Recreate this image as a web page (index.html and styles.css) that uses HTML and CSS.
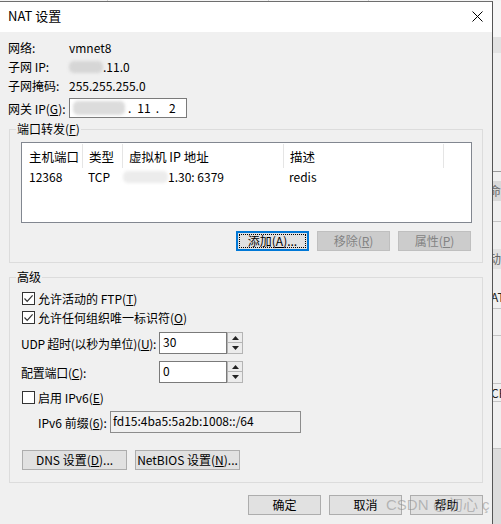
FILE: index.html
```html
<!DOCTYPE html>
<html lang="zh-CN">
<head>
<meta charset="utf-8">
<title>NAT 设置</title>
<link rel="stylesheet" href="styles.css">
</head>
<body>
<div class="topstrip"><span class="ts1"></span><span class="ts2"></span><span class="ts3"></span></div>
<div class="screen">
  <div class="dialog">
    <div class="titlebar">
      <span class="title">NAT 设置</span>
      <svg class="close" width="11" height="11" viewBox="0 0 11 11"><path d="M0.5 0.5 L10.5 10.5 M10.5 0.5 L0.5 10.5" stroke="#000" stroke-width="1" fill="none"/></svg>
    </div>
    <div class="body">
      <div class="info">
        <div class="row"><span class="lbl">网络:</span><span>vmnet8</span></div>
        <div class="row"><span class="lbl">子网 IP:</span><span class="blur b-subnet"></span><span>.11.0</span></div>
        <div class="row"><span class="lbl">子网掩码:</span><span>255.255.255.0</span></div>
        <div class="row gw"><span class="lbl">网关 IP(<u>G</u>):</span>
          <div class="ipbox"><span class="blur b-gw"></span><span class="ip-d1">.</span><span class="ip-11">11</span><span class="ip-d2">.</span><span class="ip-2">2</span></div>
        </div>
      </div>

      <fieldset class="group g1">
        <legend>端口转发(<u>F</u>)</legend>
        <div class="list">
          <div class="lhead">
            <div class="c c1">主机端口</div>
            <div class="c c2">类型</div>
            <div class="c c3">虚拟机 IP 地址</div>
            <div class="c c4">描述</div>
          </div>
          <div class="lrow">
            <div class="c c1">12368</div>
            <div class="c c2">TCP</div>
            <div class="c c3 c3d"><span class="blur b-vm"></span><span>1.30: 6379</span></div>
            <div class="c c4">redis</div>
          </div>
        </div>
        <div class="btnrow">
          <button class="btn btn-default"><span class="focus">添加(<u>A</u>)...</span></button>
          <button class="btn" disabled>移除(<u>R</u>)</button>
          <button class="btn" disabled>属性(<u>P</u>)</button>
        </div>
      </fieldset>

      <fieldset class="group g2">
        <legend>高级</legend>
        <div class="chk">
          <span class="box"><svg width="11" height="11" viewBox="0 0 11 11"><path d="M1.5 5.5 L4.2 8.3 L9.6 2.3" stroke="#333" stroke-width="1.2" fill="none"/></svg></span>
          <span>允许活动的 FTP(<u>T</u>)</span>
        </div>
        <div class="chk">
          <span class="box"><svg width="11" height="11" viewBox="0 0 11 11"><path d="M1.5 5.5 L4.2 8.3 L9.6 2.3" stroke="#333" stroke-width="1.2" fill="none"/></svg></span>
          <span>允许任何组织唯一标识符(<u>O</u>)</span>
        </div>
        <div class="field f1">
          <span class="flbl">UDP 超时(以秒为单位)(<u>U</u>):</span>
          <span class="num">30</span>
          <span class="spin"><span class="sb sb-up"><svg width="7" height="4" viewBox="0 0 7 4"><path d="M0 4 L3.5 0 L7 4Z" fill="#222"/></svg></span><span class="sb sb-dn"><svg width="7" height="4" viewBox="0 0 7 4"><path d="M0 0 L3.5 4 L7 0Z" fill="#222"/></svg></span></span>
        </div>
        <div class="field f2">
          <span class="flbl">配置端口(<u>C</u>):</span>
          <span class="num">0</span>
          <span class="spin"><span class="sb sb-up"><svg width="7" height="4" viewBox="0 0 7 4"><path d="M0 4 L3.5 0 L7 4Z" fill="#222"/></svg></span><span class="sb sb-dn"><svg width="7" height="4" viewBox="0 0 7 4"><path d="M0 0 L3.5 4 L7 0Z" fill="#222"/></svg></span></span>
        </div>
        <div class="chk chk3">
          <span class="box"></span>
          <span>启用 IPv6(<u>E</u>)</span>
        </div>
        <div class="pfx">
          <span class="plbl">IPv6 前缀(<u>6</u>):</span>
          <span class="pinput">fd15:4ba5:5a2b:1008::/64</span>
        </div>
        <div class="dnsrow">
          <button class="btn btn-wide">DNS 设置(<u>D</u>)...</button>
          <button class="btn btn-wide">NetBIOS 设置(<u>N</u>)...</button>
        </div>
      </fieldset>

      <div class="footer">
        <button class="btn">确定</button>
        <button class="btn">取消</button>
        <button class="btn">帮助</button>
      </div>
    </div>
  </div>
  <div class="side">
    <div class="s-a"></div>
    <div class="s-b"></div>
    <div class="s-c"></div>
    <div class="s-line"></div>
    <div class="s-d"></div>
    <div class="s-e">命</div>
    <div class="s-f"></div>
    <div class="s-line2"></div>
    <div class="s-g"></div>
    <div class="s-h">动</div>
    <div class="s-i"></div>
    <div class="s-j">AT</div>
    <div class="s-line2"></div>
    <div class="s-k"></div>
    <div class="s-line2"></div>
    <div class="s-l"></div>
    <div class="s-line2"></div>
    <div class="s-m">CP</div>
    <div class="s-line2"></div>
    <div class="s-n"></div>
    <div class="s-line2"></div>
    <div class="s-o"></div>
  </div>
</div>
<div class="watermark">CSDN @初心&nbsp;ç</div>
</body>
</html>
```
FILE: styles.css
```css
* { box-sizing: border-box; }

html, body {
  margin: 0;
  padding: 0;
}

body {
  width: 501px;
  height: 524px;
  overflow: hidden;
  position: relative;
  background: #f0f0f0;
  color: #000;
  font-family: "Noto Sans CJK SC", "Noto Sans", sans-serif;
  font-size: 12px;
  line-height: 19px;
}

u { text-decoration: underline; text-underline-offset: 1px; }

/* strip of the window behind, above the dialog */
.topstrip {
  height: 1px;
  display: flex;
  background: #f4f4f4;
}
.topstrip span { height: 1px; border-right: 1px solid #cfcfcf; }
.ts1 { width: 108px; }
.ts2 { width: 161px; }
.ts3 { width: 100px; }

.screen {
  display: flex;
  height: 523px;
}

.dialog {
  width: 493px;
  flex: none;
  border-top: 1px solid #6e6e6e;
  border-right: 1px solid #555;
  background: #f0f0f0;
  display: flex;
  flex-direction: column;
}

.titlebar {
  height: 30px;
  flex: none;
  background: #fff;
  display: flex;
  align-items: center;
  justify-content: space-between;
  padding: 0 9px 2px 8px;
}
.title {
  font-size: 13px;
  line-height: 16px;
}
.close { display: block; }

.body {
  display: flex;
  flex-direction: column;
}

/* network info */
.info {
  margin-top: 6px;
  padding-left: 8px;
}
.row {
  display: flex;
  align-items: center;
  height: 19px;
}
.lbl { width: 61px; flex: none; white-space: nowrap; }

.blur {
  display: inline-block;
  border-radius: 5px;
  filter: blur(1.5px);
}
.b-subnet {
  width: 34px;
  height: 12px;
  background: #d6d6d6;
}

.gw {
  height: 20px;
  margin-top: 3px;
}
.ipbox {
  width: 118px;
  height: 20px;
  border: 1px solid #7a7a7a;
  background: #fff;
  display: flex;
  align-items: center;
  padding-left: 3px;
  line-height: 18px;
}
.b-gw {
  width: 52px;
  height: 14px;
  background: #dcdcdc;
}
.ip-d1 { margin-left: 3px; }
.ip-11 { margin-left: 6px; }
.ip-d2 { margin-left: 5px; }
.ip-2 { margin-left: 10px; }

/* group boxes */
.group {
  min-width: 0;
  border: 1px solid #dcdcdc;
}
.group legend {
  padding: 0 1px;
  height: 16px;
  line-height: 16px;
  white-space: nowrap;
}
.g1 {
  margin: 3px 9px 0 9px;
  padding: 5px 10px 11px 6px;
}
.g2 {
  margin: 6px 9px 0 9px;
  padding: 4px 10px 12px 6px;
}

/* list view */
.list {
  margin-left: 5px;
  height: 81px;
  border: 1px solid #828790;
  background: #fff;
}
.lhead, .lrow {
  display: grid;
  grid-template-columns: 61px 40px 161px 160px;
}
.lhead { height: 25px; }
.lhead .c {
  border-right: 1px solid #e5e5e5;
  line-height: 25px;
  margin-top: 1px;
  height: 24px;
  padding-left: 6px;
  font-size: 12.5px;
  white-space: nowrap;
}
.lhead .c1 { padding-left: 7px; }
.lrow { height: 18px; }
.lrow .c {
  line-height: 18px;
  padding-left: 6px;
  color: #000;
  white-space: nowrap;
}
.lrow .c1 { padding-left: 7px; }
.lrow .c2 { padding-left: 5px; }
.lrow .c4 { padding-left: 5px; }
.lrow .c3d {
  padding-left: 0;
  display: flex;
  align-items: center;
}
.b-vm {
  width: 45px;
  height: 12px;
  background: #ececec;
}

/* buttons */
.btn {
  width: 73px;
  height: 20px;
  padding: 0;
  margin: 0;
  border: 1px solid #adadad;
  background: #e1e1e1;
  color: #000;
  font-family: inherit;
  font-size: 12px;
  line-height: 18px;
  text-align: center;
  white-space: nowrap;
  flex: none;
}
.btn:disabled {
  background: #cccccc;
  border-color: #bfbfbf;
  color: #838383;
}
.btn-default {
  border: 1px solid #0078d7;
  box-shadow: inset 0 0 0 1px #0078d7;
  padding: 2px;
  line-height: 14px;
}
.focus {
  display: block;
  height: 14px;
  outline: 1px dotted #000;
  outline-offset: -1px;
  line-height: 14px;
}
.btnrow {
  display: flex;
  justify-content: flex-end;
  gap: 8px;
  margin-top: 8px;
  margin-right: 1px;
}

/* advanced */
.chk {
  display: flex;
  align-items: center;
  height: 19px;
  margin-left: 6px;
  white-space: nowrap;
}
.box {
  width: 13px;
  height: 13px;
  flex: none;
  border: 1px solid #333;
  background: #fff;
  margin-right: 3px;
  display: flex;
  align-items: center;
  justify-content: center;
}
.box svg { display: block; }

.field {
  display: flex;
  align-items: center;
  height: 22px;
  margin-left: 5px;
}
.f1 { margin-top: 5px; }
.f2 { margin-top: 7px; }
.flbl {
  width: 138px;
  flex: none;
  white-space: nowrap;
  letter-spacing: -0.25px;
}
.num {
  width: 68px;
  height: 22px;
  flex: none;
  border: 1px solid #7a7a7a;
  background: #fff;
  padding-left: 3px;
  line-height: 18px;
}
.spin {
  width: 16px;
  height: 22px;
  flex: none;
  display: flex;
  flex-direction: column;
}
.sb {
  height: 11px;
  border: 1px solid #b4b4b4;
  background: #ececec;
  display: flex;
  align-items: center;
  justify-content: center;
}
.sb-dn { border-top: none; }
.sb svg { display: block; }

.chk3 { margin-top: 5px; }

.pfx {
  display: flex;
  align-items: center;
  height: 22px;
  margin-top: 4px;
  margin-left: 22px;
}
.plbl { width: 72px; flex: none; white-space: nowrap; }
.pinput {
  width: 191px;
  height: 22px;
  flex: none;
  border: 1px solid #8c8c8c;
  background: #f0f0f0;
  padding-left: 2px;
  line-height: 18px;
  white-space: nowrap;
}

.dnsrow {
  display: flex;
  gap: 8px;
  margin-top: 17px;
  margin-left: 6px;
}
.btn-wide { width: 105px; }

.footer {
  display: flex;
  justify-content: flex-end;
  gap: 8px;
  margin-top: 12px;
  padding-right: 9px;
}

/* sliver of the window behind, right of the dialog */
.side {
  flex: 1;
  display: flex;
  flex-direction: column;
  overflow: hidden;
  font-size: 12px;
  line-height: 16px;
  color: #666;
  white-space: nowrap;
}
.side > div { flex: none; }
.s-a { height: 36px; background: #f6f6f6; }
.s-b { height: 16px; background: #e2e2e2; }
.s-c { height: 118px; background: #f0f0f0; }
.s-line { height: 1px; background: #9a9a9a; }
.s-d { height: 9px; background: #f0f0f0; }
.s-e { height: 20px; background: #d9d9d9; line-height: 20px; margin-left: -4px; }
.s-f { height: 20px; background: #f0f0f0; }
.s-line2 { height: 1px; background: #c4c4c4; }
.s-g { height: 27px; background: #f0f0f0; }
.s-h { height: 20px; background: #e2e2e2; line-height: 20px; margin-left: -4px; }
.s-i { height: 17px; background: #f0f0f0; }
.s-j { height: 22px; background: #f0f0f0; color: #222; line-height: 22px; margin-left: -2px; }
.s-k { height: 26px; background: #f0f0f0; }
.s-l { height: 47px; background: #f0f0f0; }
.s-m { height: 17px; background: #f0f0f0; color: #222; line-height: 17px; margin-left: -2px; }
.s-n { height: 46px; background: #f0f0f0; }
.s-o { height: 100px; background: #dcdcdc; }

/* watermark over the footer */
.watermark {
  position: absolute;
  left: 386px;
  top: 496px;
  font-family: "Liberation Sans", "Noto Sans CJK SC", sans-serif;
  font-size: 15px;
  line-height: 18px;
  color: rgba(140, 140, 140, 0.55);
  white-space: nowrap;
  pointer-events: none;
}
```
